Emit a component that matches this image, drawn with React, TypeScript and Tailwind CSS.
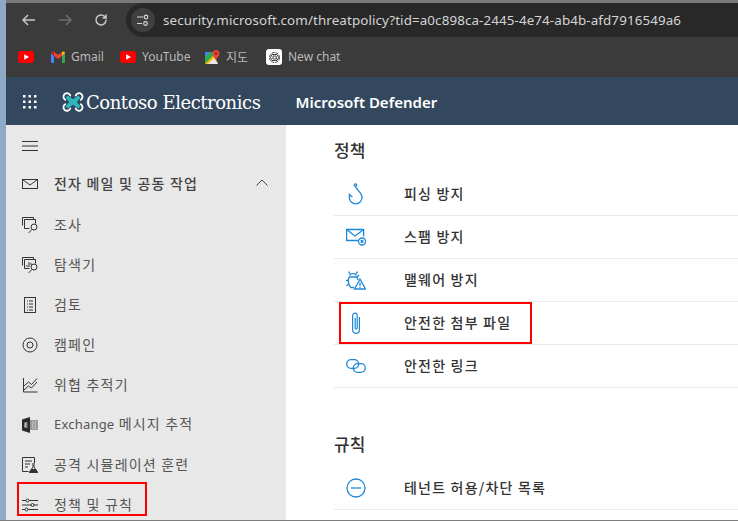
import { FC, ReactNode } from "react";

const KR = "font-['Noto_Sans_CJK_KR','Noto_Sans',sans-serif]";
const UI = "font-['Noto_Sans','Noto_Sans_CJK_KR',sans-serif]";

const Svg: FC<{ size?: number; className?: string; children: ReactNode }> = ({ size = 16, className, children }) => (
  <svg width={size} height={size} viewBox={`0 0 ${size} ${size}`} fill="none" stroke="currentColor" strokeWidth="1" className={className}>
    {children}
  </svg>
);

const YouTube = () => (
  <svg width="16" height="12" viewBox="0 0 16 12">
    <rect width="16" height="12" rx="3" fill="#ff0000" />
    <path d="M6.2 3.2 11 6l-4.8 2.8z" fill="#fff" />
  </svg>
);

const Gmail = () => (
  <svg width="14" height="12" viewBox="0 0 14 12">
    <path d="M0 2v9a1 1 0 0 0 1 1h2V5z" fill="#4285f4" />
    <path d="M14 2v9a1 1 0 0 1-1 1h-2V5z" fill="#34a853" />
    <path d="M3 5 7 8l4-3V1l-4 3-4-3z" fill="#ea4335" />
    <path d="M0 2c0-1.5 1.7-2.200 3-1v4z" fill="#c5221f" />
    <path d="M14 2c0-1.500-1.700-2.200-3-1v4z" fill="#fbbc04" />
  </svg>
);

const Maps = () => (
  <svg width="15" height="15" viewBox="0 0 15 15">
    <path d="M0 2h9v5L0 14z" fill="#34a853" />
    <path d="M0 14 9 5l4 9H1z" fill="#fbbc04" />
    <path d="M0 2h5L0 7z" fill="#4285f4" />
    <path d="M3 14 9 8l4 6z" fill="#e8eaed" />
    <path d="M11 0a3.500 3.500 0 0 1 3.500 3.500C14.500 6 12 8 11 10 10 8 7.500 6 7.500 3.500A3.500 3.500 0 0 1 11 0z" fill="#ea4335" />
    <circle cx="11" cy="3.500" r="1.300" fill="#a52714" />
  </svg>
);

const ChatIcon = () => (
  <span className="flex h-4 w-4 items-center justify-center rounded-[3px] bg-white">
    <svg width="13" height="13" viewBox="0 0 13 13" fill="none" stroke="#333" strokeWidth="0.9">
      <circle cx="6.500" cy="6.500" r="5" strokeDasharray="3 1" />
      <path d="M4 3.500 9 3.500 10.500 6.500 9 9.500 4 9.500 2.500 6.500z" />
      <path d="M5 5 8 5 8.500 8 5 8z" />
    </svg>
  </span>
);

const Bookmark: FC<{ icon: ReactNode; label?: string; kr?: boolean; className?: string }> = ({ icon, label, kr, className }) => (
  <div className={`flex items-center gap-[6px] ${className ?? ""}`}>
    {icon}
    {label && <span className={`text-[12px] leading-none text-[#b9b9b9] ${kr ? KR : UI}`}>{label}</span>}
  </div>
);

const Logo = () => (
  <svg width="22" height="24" viewBox="0 0 24 26" fill="none">
    <path d="M6 6 12 10 18 6 20 8.500 16 13 20 17.500 18 20 12 16 6 20 4 17.500 8 13 4 8.500z" fill="#2bb7c0" />
    <g stroke="#fff" strokeWidth="2" strokeLinecap="round">
      <path d="M9 6A3.800 3.800 0 1 0 3.500 10.500" />
      <path d="M15 6A3.800 3.800 0 1 1 20.500 10.500" />
      <path d="M9 20A3.800 3.800 0 1 1 3.500 15.500" />
      <path d="M15 20A3.800 3.800 0 1 0 20.500 15.500" />
    </g>
  </svg>
);

const SideIcons: Record<string, ReactNode> = {
  mail: (
    <Svg>
      <rect x="0.500" y="3.500" width="15" height="9" />
      <path d="M0.500 3.500 8 9l7.500-5.500" />
    </Svg>
  ),
  investigate: (
    <Svg>
      <path d="M.5 8.500V.5h11v2" />
      <path d="M2.500 2.500h11v4M2.500 2.500v9h5" />
      <circle cx="12" cy="10" r="3" />
      <path d="M10 12.500 6.500 16" />
    </Svg>
  ),
  explorer: (
    <Svg>
      <path d="M.5 8.500V.5h11v2" />
      <path d="M2.500 2.500h11v4M2.500 2.500v9h5" />
      <path d="M5 10V8M7 10V5M9 8V6" />
      <circle cx="12" cy="10" r="3" />
      <path d="M10 12.500 6.500 16" />
    </Svg>
  ),
  review: (
    <Svg>
      <rect x="2.500" y="0.500" width="11" height="15" />
      <path d="M5 4h1M7 4h4M5 7h1M7 7h4M5 10h1M7 10h4M5 13h1M7 13h4" />
    </Svg>
  ),
  campaign: (
    <Svg>
      <circle cx="8" cy="8" r="7" />
      <circle cx="8" cy="8" r="3" />
    </Svg>
  ),
  tracker: (
    <Svg>
      <path d="M1.500 1v14H15.500" />
      <path d="M2 9 6.500 5l3 2.500L15 1.500M2 13 6.500 9l3 2 5.500-6" />
    </Svg>
  ),
  exchange: (
    <svg width="16" height="16" viewBox="0 0 16 16">
      <rect x="8" y="3" width="8" height="10" fill="#9a9a9a" />
      <path d="M0 2.500 8 0v16l-8-2.500z" fill="#2b2b2b" />
      <path d="M2.500 5.500h3v1h-2v1h2v1h-2v1h2v1h-3z" fill="#e8e8e8" />
      <path d="M10 5h1M13 5h1M11.500 6.500h1M10 8h1M13 8h1M11.500 9.500h1M10 11h1M13 11h1" stroke="#e8e8e8" />
    </svg>
  ),
  attack: (
    <Svg>
      <path d="M12.500 6V.5H.5v14h6" />
      <path d="M3 4h7M3 7h5M3 10h3" />
      <path d="M11 6v4l-3.500 5.500h8L12 10V6" fill="#e8e8e8" />
      <path d="M9 12.500h5l1.500 3h-8z" fill="#333" />
    </Svg>
  ),
  policy: (
    <Svg>
      <path d="M0 3.500h4M7 3.500h9M0 8h9M12 8h4M0 12.500h3M6 12.500h10" />
      <circle cx="5.500" cy="3.500" r="1.500" />
      <circle cx="10.500" cy="8" r="1.500" />
      <circle cx="4.500" cy="12.500" r="1.500" />
    </Svg>
  ),
};

const NavItem: FC<{ icon: string; label: ReactNode; boxed?: boolean }> = ({ icon, label, boxed }) => (
  <div className="relative flex h-10 items-center pl-4">
    <span className="mr-4 flex w-4 shrink-0 justify-center text-[#333]">{SideIcons[icon]}</span>
    <span className={`whitespace-nowrap pb-[2px] text-[14px] tracking-[1.2px] text-[#555] ${KR}`}>{label}</span>
    {boxed && <span className="absolute left-[11px] top-[-3px] h-[34px] w-[130px] border-2 border-[#f00]" />}
  </div>
);

const RowIcons: Record<string, ReactNode> = {
  phish: (
    <svg width="16" height="22" viewBox="0 0 16 22" fill="none" stroke="currentColor" strokeWidth="1.300">
      <circle cx="7.500" cy="2" r="1.200" />
      <path d="M7.500 3.500C8.500 7 14 9.500 14 14.500a6.300 6.300 0 0 1-12.600 0V11.500l3 2.500" />
    </svg>
  ),
  spam: (
    <svg width="20" height="18" viewBox="0 0 20 18" fill="none" stroke="currentColor" strokeWidth="1.300">
      <path d="M12 12.500H.6V1.500h17V8.500" />
      <path d="M.6 1.500 9 8l8.600-6.500" />
      <circle cx="16" cy="13.500" r="3.500" />
      <path d="M14.700 12.200 17.300 14.800M17.300 12.200 14.700 14.800" />
    </svg>
  ),
  malware: (
    <svg width="20" height="20" viewBox="0 0 20 20" fill="none" stroke="currentColor" strokeWidth="1.300">
      <path d="M4 5.500C4 3 10 3 10 5.500M3 7h8l1 3M3 7c-1 3-1 8 2 10.500h3" />
      <path d="M4 4 2.500 1.500M10 4l1.500-2.500M2.500 10.500H0M2.500 14 .5 16M11 7l2-2" />
      <path d="M14 9l5.500 10H8.500z" />
      <path d="M14 12.500v3.500M14 17v1" />
    </svg>
  ),
  attach: (
    <svg width="8" height="22" viewBox="0 0 8 22" fill="none" stroke="currentColor" strokeWidth="1.200">
      <path d="M7.400 5V18a3.400 3.400 0 0 1-6.800 0V3.500a2.300 2.300 0 0 1 4.600 0V16a1 1 0 0 1-2 0V6" />
    </svg>
  ),
  link: (
    <svg width="20" height="14" viewBox="0 0 20 14" fill="none" stroke="currentColor" strokeWidth="1.300">
      <rect x="0.700" y="0.700" width="12" height="8.600" rx="4.300" />
      <rect x="7.300" y="4.700" width="12" height="8.600" rx="4.300" />
    </svg>
  ),
  minus: (
    <svg width="20" height="20" viewBox="0 0 20 20" fill="none" stroke="currentColor" strokeWidth="1.300">
      <circle cx="10" cy="10" r="9" />
      <path d="M5 10h10" />
    </svg>
  ),
};

const PolicyRow: FC<{ icon: string; label: string; boxed?: boolean }> = ({ icon, label, boxed }) => (
  <div className="relative flex h-[43px] items-center border-b border-[#ebebeb]">
    <span className="flex w-[70px] shrink-0 justify-center pr-[27px] text-[#1e88d8]">{RowIcons[icon]}</span>
    <span className={`pb-[2px] text-[14px] font-medium tracking-[1.2px] text-[#333] ${KR}`}>{label}</span>
    {boxed && <span className="absolute left-[5px] top-0 h-[42px] w-[193px] border-2 border-[#f00]" />}
  </div>
);

const App: FC = () => {
  return (
    <div className="flex h-[521px] w-[738px] flex-col overflow-hidden border-b border-[#7d7d7d] bg-[#8eaac4] pl-[6px]">
      <div className="h-[3px] shrink-0 bg-[#7a7a7a]" />
      {/* browser toolbar */}
      <div className="flex h-[34px] shrink-0 items-center bg-[#3b3b3b] pl-[14px]">
        <svg width="18" height="16" viewBox="0 0 18 16" fill="none" stroke="#c8c8c8" strokeWidth="1.500">
          <path d="M15 8H3M8 3 3 8l5 5" />
        </svg>
        <svg width="18" height="16" viewBox="0 0 18 16" fill="none" stroke="#6e6e6e" strokeWidth="1.500" className="ml-[18px]">
          <path d="M3 8h12M10 3l5 5-5 5" />
        </svg>
        <svg width="16" height="16" viewBox="0 0 16 16" fill="none" stroke="#c8c8c8" strokeWidth="1.500" className="ml-[19px]">
          <path d="M13 8a5 5 0 1 1-1.500-3.600L13 6V2.500M13 6H9.500" />
        </svg>
        <div className="ml-[17px] flex h-[34px] flex-1 items-center rounded-l-full bg-[#282828] pl-[5px]">
          <span className="flex h-6 w-6 items-center justify-center rounded-full bg-[#3f3f3f]">
            <svg width="14" height="14" viewBox="0 0 14 14" fill="none" stroke="#d8d8d8" strokeWidth="1.200">
              <path d="M1 4h6M1 10.500h5" />
              <circle cx="10" cy="4" r="1.800" />
              <circle cx="9.500" cy="10.500" r="1.800" />
            </svg>
          </span>
          <span className={`ml-[8px] whitespace-nowrap text-[13.4px] tracking-[0.1px] text-[#d4d4d4] ${UI}`}>
            security.microsoft.com/threatpolicy?tid=a0c898ca-2445-4e74-ab4b-afd7916549a6
          </span>
        </div>
      </div>
      {/* bookmarks */}
      <div className="flex h-10 shrink-0 items-center bg-[#3b3b3b] pl-3">
        <Bookmark icon={<YouTube />} className="w-[33px]" />
        <Bookmark icon={<Gmail />} label="Gmail" className="w-[69px]" />
        <Bookmark icon={<YouTube />} label="YouTube" className="w-[85px]" />
        <Bookmark icon={<Maps />} label="지도" kr className="w-[61px]" />
        <Bookmark icon={<ChatIcon />} label="New chat" />
      </div>
      {/* app header */}
      <div className="flex h-12 shrink-0 items-center bg-[#33485e] pt-[2px] text-white">
        <svg width="16" height="16" viewBox="0 0 16 16" fill="#fff" className="ml-4">
          {[1, 6.500, 12].map((y) => [1, 6.500, 12].map((x) => <rect key={`${x}-${y}`} x={x} y={y} width="2.500" height="2.500" />))}
        </svg>
        <span className="ml-[24px] flex"><Logo /></span>
        <span className="ml-[2px] whitespace-nowrap font-['DejaVu_Serif',serif] text-[18px] tracking-[-0.45px]">Contoso Electronics</span>
        <span className={`ml-[35px] text-[15px] font-semibold ${UI}`}>Microsoft Defender</span>
      </div>
      <div className="flex min-h-0 flex-1 bg-white">
        {/* side nav */}
        <aside className="w-[280px] shrink-0 bg-[#e8e8e8]">
          <div className="flex h-[41px] items-center pl-4 text-[#333]">
            <svg width="16" height="12" viewBox="0 0 16 12" stroke="currentColor" fill="none">
              <path d="M0 1.500h16M0 6h16M0 10.500h16" />
            </svg>
          </div>
          <div className="flex h-[36px] items-center pl-4 pr-[18px]">
            <span className="mr-4 flex w-4 shrink-0 justify-center text-[#333]">{SideIcons.mail}</span>
            <span className={`flex-1 pb-[2px] text-[14px] font-medium tracking-[1.2px] text-[#444] ${KR}`}>전자 메일 및 공동 작업</span>
            <svg width="12" height="7" viewBox="0 0 12 7" fill="none" stroke="#444" className="mb-[3px]">
              <path d="M.5 6.500 6 1l5.500 5.500" />
            </svg>
          </div>
          <div className="mt-[3px]">
            <NavItem icon="investigate" label="조사" />
            <NavItem icon="explorer" label="탐색기" />
            <NavItem icon="review" label="검토" />
            <NavItem icon="campaign" label="캠페인" />
            <NavItem icon="tracker" label="위협 추적기" />
            <NavItem
              icon="exchange"
              label={
                <>
                  <span className={`text-[13px] tracking-[0.2px] ${UI}`}>Exchange</span> 메시지 추적
                </>
              }
            />
            <NavItem icon="attack" label="공격 시뮬레이션 훈련" />
            <NavItem icon="policy" label="정책 및 규칙" boxed />
          </div>
        </aside>
        {/* main */}
        <main className="flex-1 pl-[48px]">
          <h2 className={`flex h-[48px] items-center pt-[1px] text-[17px] font-medium text-[#333] ${KR}`}>정책</h2>
          <div>
            <PolicyRow icon="phish" label="피싱 방지" />
            <PolicyRow icon="spam" label="스팸 방지" />
            <PolicyRow icon="malware" label="맬웨어 방지" />
            <PolicyRow icon="attach" label="안전한 첨부 파일" boxed />
            <PolicyRow icon="link" label="안전한 링크" />
          </div>
          <h2 className={`mt-[44px] flex h-6 items-center text-[17px] font-medium text-[#333] ${KR}`}>규칙</h2>
          <div className="mt-[11px]">
            <PolicyRow icon="minus" label="테넌트 허용/차단 목록" />
          </div>
        </main>
      </div>
    </div>
  );
};

export default App;
